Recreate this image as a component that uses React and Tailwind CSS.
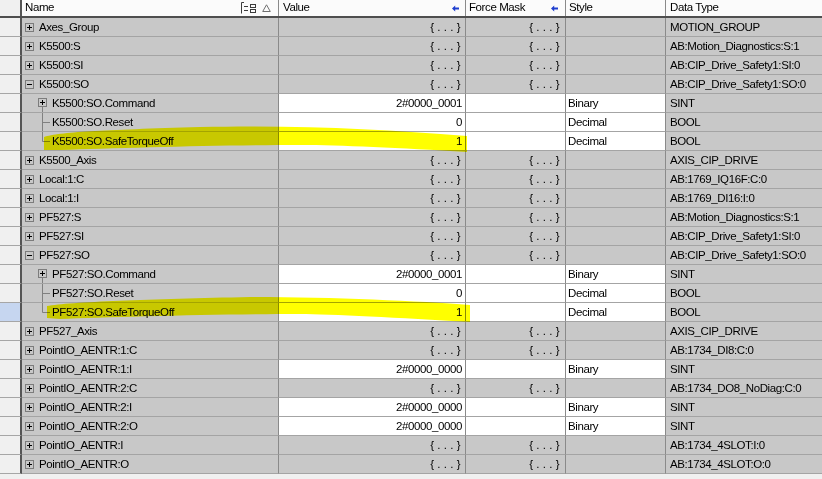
import React from 'react';

const GRAY = 'bg-[#c8c8c8]';
const WHITE = 'bg-white';

const rows = [
  { name: 'Axes_Group', box: '+', type: 'MOTION_GROUP' },
  { name: 'K5500:S', box: '+', type: 'AB:Motion_Diagnostics:S:1' },
  { name: 'K5500:SI', box: '+', type: 'AB:CIP_Drive_Safety1:SI:0' },
  { name: 'K5500:SO', box: '-', type: 'AB:CIP_Drive_Safety1:SO:0' },
  { name: 'K5500:SO.Command', child: 'first', value: '2#0000_0001', style: 'Binary', type: 'SINT' },
  { name: 'K5500:SO.Reset', child: 'mid', value: '0', style: 'Decimal', type: 'BOOL' },
  { name: 'K5500:SO.SafeTorqueOff', child: 'last', value: '1', style: 'Decimal', type: 'BOOL' },
  { name: 'K5500_Axis', box: '+', type: 'AXIS_CIP_DRIVE' },
  { name: 'Local:1:C', box: '+', type: 'AB:1769_IQ16F:C:0' },
  { name: 'Local:1:I', box: '+', type: 'AB:1769_DI16:I:0' },
  { name: 'PF527:S', box: '+', type: 'AB:Motion_Diagnostics:S:1' },
  { name: 'PF527:SI', box: '+', type: 'AB:CIP_Drive_Safety1:SI:0' },
  { name: 'PF527:SO', box: '-', type: 'AB:CIP_Drive_Safety1:SO:0' },
  { name: 'PF527:SO.Command', child: 'first', value: '2#0000_0001', style: 'Binary', type: 'SINT' },
  { name: 'PF527:SO.Reset', child: 'mid', value: '0', style: 'Decimal', type: 'BOOL' },
  { name: 'PF527:SO.SafeTorqueOff', child: 'last', value: '1', style: 'Decimal', type: 'BOOL', selected: true },
  { name: 'PF527_Axis', box: '+', type: 'AXIS_CIP_DRIVE' },
  { name: 'PointIO_AENTR:1:C', box: '+', type: 'AB:1734_DI8:C:0' },
  { name: 'PointIO_AENTR:1:I', box: '+', value: '2#0000_0000', style: 'Binary', type: 'SINT' },
  { name: 'PointIO_AENTR:2:C', box: '+', type: 'AB:1734_DO8_NoDiag:C:0' },
  { name: 'PointIO_AENTR:2:I', box: '+', value: '2#0000_0000', style: 'Binary', type: 'SINT' },
  { name: 'PointIO_AENTR:2:O', box: '+', value: '2#0000_0000', style: 'Binary', type: 'SINT' },
  { name: 'PointIO_AENTR:I', box: '+', type: 'AB:1734_4SLOT:I:0' },
  { name: 'PointIO_AENTR:O', box: '+', type: 'AB:1734_4SLOT:O:0' },
];

function ExpandBox({ sign }) {
  return (
    <svg width="9" height="9" viewBox="0 0 9 9" className="shrink-0 -mt-[1px]">
      <rect x="0.5" y="0.5" width="8" height="8" fill="none" stroke="#7c7c7c" />
      <path d="M2 4.5H7" stroke="#000" />
      {sign === '+' && <path d="M4.5 2V7" stroke="#000" />}
    </svg>
  );
}

// tree connectors for child tags (Command / Reset / SafeTorqueOff)
function TreeLines({ kind }) {
  return (
    <svg width="13" height="18" viewBox="0 0 13 18" className="shrink-0 -mt-[1px]">
      {kind === 'first' && (
        <>
          <rect x="0.5" y="4.5" width="8" height="8" fill="none" stroke="#7c7c7c" />
          <path d="M2 8.5H7M4.5 6V11" stroke="#000" />
          <path d="M4.5 13V18" stroke="#808080" />
        </>
      )}
      {kind === 'mid' && <path d="M4.5 0V18M4.5 9.5H12" stroke="#808080" />}
      {kind === 'last' && <path d="M4.5 0V9.5M4.5 9.5H12" stroke="#808080" />}
    </svg>
  );
}

function ColumnIcon() {
  return (
    <svg width="16" height="12" viewBox="0 0 16 12">
      <path d="M0.5 0.5V11.5M0.5 0.5H3" stroke="#3c3c3c" />
      <path d="M3 4.5H7M3 8.5H7" stroke="#3c3c3c" />
      <rect x="9.5" y="2.5" width="5" height="3" fill="none" stroke="#3c3c3c" />
      <rect x="9.5" y="7.5" width="5" height="3" fill="none" stroke="#3c3c3c" />
    </svg>
  );
}

function SortTriangle() {
  return (
    <svg width="9" height="8" viewBox="0 0 9 8">
      <path d="M4.5 0.8L8.3 7.5H0.7Z" fill="none" stroke="#707070" />
    </svg>
  );
}

function BlueArrow() {
  return (
    <svg width="7" height="7" viewBox="0 0 7 7">
      <path d="M0 3.5L3.2 0.5V2.5H7V4.5H3.2V6.5Z" fill="#1f3fcf" />
    </svg>
  );
}

function Dots() {
  return <span className="tracking-[3.3px]">{'{...}'}</span>;
}

function Row({ r }) {
  const editable = r.value !== undefined;
  return (
    <div className="flex h-[19px]">
      <div
        className={`w-[22px] shrink-0 border-b border-r-2 border-b-[#a6a6a6] border-r-[#555] ${
          r.selected ? 'bg-[#c6d6f0]' : 'bg-[#f0f0f0]'
        }`}
      />
      <div className={`w-[257px] shrink-0 flex items-center pt-[1px] border-b border-r border-b-[#a4a4a4] border-r-[#8a8a8a] ${GRAY}`}>
        {r.child ? (
          <div className="flex items-center pl-[16px] gap-[1px]">
            <TreeLines kind={r.child} />
            <span>{r.name}</span>
          </div>
        ) : (
          <div className="flex items-center pl-[3px] gap-[5px]">
            <ExpandBox sign={r.box} />
            <span>{r.name}</span>
          </div>
        )}
      </div>
      <div
        className={`w-[187px] shrink-0 flex items-center justify-end pt-[1px] border-b border-r border-b-[#a4a4a4] border-r-[#8a8a8a] ${
          editable ? `${WHITE} pr-[3px]` : `${GRAY} pr-[1px]`
        }`}
      >
        {editable ? r.value : <Dots />}
      </div>
      <div
        className={`w-[100px] shrink-0 flex items-center justify-end pt-[1px] pr-[2px] border-b border-r border-b-[#a4a4a4] border-r-[#8a8a8a] ${
          editable ? WHITE : GRAY
        }`}
      >
        {editable ? null : <Dots />}
      </div>
      <div
        className={`w-[100px] shrink-0 flex items-center pt-[1px] pl-[2px] border-b border-r border-b-[#a4a4a4] border-r-[#8a8a8a] ${
          editable ? WHITE : GRAY
        }`}
      >
        {r.style}
      </div>
      <div className={`flex-1 flex items-center pt-[1px] pl-[4px] border-b border-b-[#a4a4a4] ${GRAY}`}>{r.type}</div>
    </div>
  );
}

export default function App() {
  return (
    <div className="w-[822px] h-[479px] overflow-hidden bg-[#f0f0f0] text-black text-[11.5px] tracking-[-0.4px] font-['Liberation_Sans',Arial,sans-serif] leading-none">
      <div className="relative">
        <div className="flex h-[18px] bg-[#fbfbfb] border-b-2 border-[#4e4e4e]">
          <div className="w-[22px] shrink-0 bg-[#f0f0f0] border-r-2 border-[#555]" />
          <div className="w-[257px] shrink-0 flex items-center justify-between pl-[3px] pr-[7px] border-r border-[#8a8a8a]">
            <span>Name</span>
            <div className="flex items-center gap-[5px]">
              <ColumnIcon />
              <SortTriangle />
            </div>
          </div>
          <div className="w-[187px] shrink-0 flex items-center justify-between pl-[4px] pr-[6px] border-r border-[#8a8a8a]">
            <span>Value</span>
            <BlueArrow />
          </div>
          <div className="w-[100px] shrink-0 flex items-center justify-between pl-[3px] pr-[7px] border-r border-[#8a8a8a]">
            <span>Force Mask</span>
            <BlueArrow />
          </div>
          <div className="w-[100px] shrink-0 flex items-center pl-[3px] border-r border-[#8a8a8a]">
            <span>Style</span>
          </div>
          <div className="flex-1 flex items-center pl-[4px]">
            <span>Data Type</span>
          </div>
        </div>

        {rows.map((r) => (
          <Row key={r.name} r={r} />
        ))}

        {/* highlighter marks drawn over the grid */}
        <svg
          className="absolute left-0 top-0 pointer-events-none mix-blend-multiply"
          width="822"
          height="479"
          viewBox="0 0 822 479"
        >
          <path
            d="M44 137 C60 132 100 130 200 127 C300 125 380 129 467 136 L467 152 C400 148 340 145 300 145 C220 145 120 148 60 150 L44 150 Z"
            fill="#ffff00"
          />
          <path
            d="M47 306 C70 302 150 299 250 297 C330 297 420 301 470 305 L470 322 C400 318 330 314 300 314 C220 314 110 317 60 319 L47 318 Z"
            fill="#ffff00"
          />
        </svg>
      </div>
    </div>
  );
}
